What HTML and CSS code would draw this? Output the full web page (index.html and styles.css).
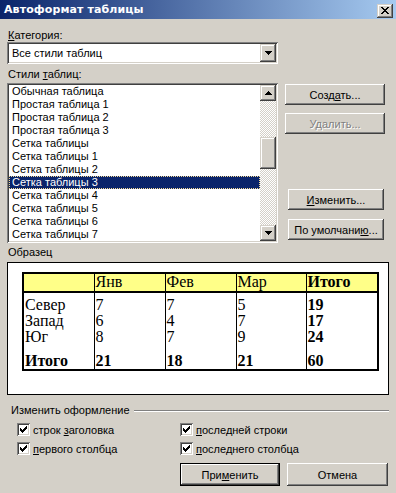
FILE: index.html
```html
<!DOCTYPE html>
<html lang="ru">
<head>
  <meta charset="UTF-8" />
  <title>Автоформат таблицы</title>
  <link rel="stylesheet" href="styles.css">
</head>
<body>
  <div class="dialog">
    <div class="titlebar">
      <span class="title">Автоформат таблицы</span>
      <div class="close-btn raised">
        <svg width="8" height="7" viewBox="0 0 8 7" shape-rendering="crispEdges">
          <path d="M0 0h2v1h-2z M6 0h2v1h-2z M1 1h2v1h-2z M5 1h2v1h-2z M2 2h4v1h-4z M3 3h2v1h-2z M2 4h4v1h-4z M1 5h2v1h-2z M5 5h2v1h-2z M0 6h2v1h-2z M6 6h2v1h-2z" fill="#000"/>
        </svg>
      </div>
    </div>

    <div class="content">
      <div class="lbl lbl-cat"><u>К</u>атегория:</div>
      <div class="combo sunken">
        <div class="combo-text">Все стили таблиц</div>
        <div class="arrow-btn raised">
          <svg width="7" height="4" viewBox="0 0 7 4" shape-rendering="crispEdges"><path d="M0 0h7v1h-1v1h-1v1h-1v1h-1v-1h-1v-1h-1v-1h-1z" fill="#000"/></svg>
        </div>
      </div>

      <div class="lbl lbl-styles">Стили <u>т</u>аблиц:</div>
      <div class="styles-row">
        <div class="listbox sunken">
          <ul class="items">
            <li>Обычная таблица</li>
            <li>Простая таблица 1</li>
            <li>Простая таблица 2</li>
            <li>Простая таблица 3</li>
            <li>Сетка таблицы</li>
            <li>Сетка таблицы 1</li>
            <li>Сетка таблицы 2</li>
            <li class="selected">Сетка таблицы 3</li>
            <li>Сетка таблицы 4</li>
            <li>Сетка таблицы 5</li>
            <li>Сетка таблицы 6</li>
            <li>Сетка таблицы 7</li>
          </ul>
          <div class="scrollbar">
            <div class="arrow-btn raised">
              <svg width="7" height="4" viewBox="0 0 7 4" shape-rendering="crispEdges"><path d="M3 0h1v1h1v1h1v1h1v1h-7v-1h1v-1h1v-1h1z" fill="#000"/></svg>
            </div>
            <div class="track track-top"></div>
            <div class="thumb raised"></div>
            <div class="track track-bottom"></div>
            <div class="arrow-btn raised">
              <svg width="7" height="4" viewBox="0 0 7 4" shape-rendering="crispEdges"><path d="M0 0h7v1h-1v1h-1v1h-1v1h-1v-1h-1v-1h-1v-1h-1z" fill="#000"/></svg>
            </div>
          </div>
        </div>

        <div class="side-btns">
          <div class="btn btn-create"><span>Созд<u>а</u>ть...</span></div>
          <div class="btn btn-delete disabled"><span>Удалить...</span></div>
          <div class="btn btn-edit"><span><u>И</u>зменить...</span></div>
          <div class="btn btn-default"><span>По умолчани<u>ю</u>...</span></div>
        </div>
      </div>

      <div class="lbl lbl-sample">Образец</div>
      <div class="preview">
        <table class="sample">
          <colgroup>
            <col class="c1"><col class="c2"><col class="c3"><col class="c4"><col class="c5">
          </colgroup>
          <tr class="head">
            <td>&nbsp;</td><td>Янв</td><td>Фев</td><td>Мар</td><td class="b">Итого</td>
          </tr>
          <tr class="first">
            <td>Север</td><td>7</td><td>7</td><td>5</td><td class="b">19</td>
          </tr>
          <tr>
            <td>Запад</td><td>6</td><td>4</td><td>7</td><td class="b">17</td>
          </tr>
          <tr>
            <td>Юг</td><td>8</td><td>7</td><td>9</td><td class="b">24</td>
          </tr>
          <tr class="last">
            <td class="b">Итого</td><td class="b">21</td><td class="b">18</td><td class="b">21</td><td class="b">60</td>
          </tr>
        </table>
      </div>

      <div class="group-title">
        <span>Изменить оформление</span>
        <div class="etched"></div>
      </div>

      <div class="checks">
        <div class="check"><span class="box"><svg width="7" height="7" viewBox="0 0 7 7" shape-rendering="crispEdges"><path d="M0 2h1v3h-1z M1 3h1v3h-1z M2 4h1v3h-1z M3 3h1v3h-1z M4 2h1v3h-1z M5 1h1v3h-1z M6 0h1v3h-1z" fill="#000"/></svg></span><span>строк <u>з</u>аголовка</span></div>
        <div class="check"><span class="box"><svg width="7" height="7" viewBox="0 0 7 7" shape-rendering="crispEdges"><path d="M0 2h1v3h-1z M1 3h1v3h-1z M2 4h1v3h-1z M3 3h1v3h-1z M4 2h1v3h-1z M5 1h1v3h-1z M6 0h1v3h-1z" fill="#000"/></svg></span><span><u>п</u>оследней строки</span></div>
        <div class="check"><span class="box"><svg width="7" height="7" viewBox="0 0 7 7" shape-rendering="crispEdges"><path d="M0 2h1v3h-1z M1 3h1v3h-1z M2 4h1v3h-1z M3 3h1v3h-1z M4 2h1v3h-1z M5 1h1v3h-1z M6 0h1v3h-1z" fill="#000"/></svg></span><span><u>п</u>ервого столбца</span></div>
        <div class="check"><span class="box"><svg width="7" height="7" viewBox="0 0 7 7" shape-rendering="crispEdges"><path d="M0 2h1v3h-1z M1 3h1v3h-1z M2 4h1v3h-1z M3 3h1v3h-1z M4 2h1v3h-1z M5 1h1v3h-1z M6 0h1v3h-1z" fill="#000"/></svg></span><span><u>п</u>оследнего столбца</span></div>
      </div>

      <div class="actions">
        <div class="btn btn-apply"><span>При<u>м</u>енить</span></div>
        <div class="btn btn-cancel"><span>Отмена</span></div>
      </div>
    </div>
  </div>
</body>
</html>
```

FILE: styles.css
```css
body {
  margin: 0;
  background: #d4d0c8;
}
.dialog {
  width: 396px;
  height: 493px;
  background: #d4d0c8;
  font-family: "Liberation Sans", Arial, sans-serif;
  font-size: 11px;
  color: #000;
  overflow: hidden;
}
u {
  text-decoration: underline;
  text-underline-offset: 1px;
}

/* 3d edges */
.raised {
  background: #d4d0c8;
  box-shadow: inset -1px -1px #404040, inset 1px 1px #d4d0c8, inset -2px -2px #808080, inset 2px 2px #fff;
}
.sunken {
  background: #fff;
  box-shadow: inset 1px 1px #808080, inset -1px -1px #fff, inset 2px 2px #404040, inset -2px -2px #d4d0c8;
}

.titlebar {
  height: 19px;
  display: flex;
  align-items: center;
  justify-content: space-between;
  padding: 0 3px 0 4px;
  background: linear-gradient(to right, #0a246a, #a6caf0);
}
.title {
  color: #fff;
  font-family: "DejaVu Sans", sans-serif;
  font-weight: bold;
  font-size: 11px;
  letter-spacing: 0.1px;
}
.close-btn {
  width: 16px;
  height: 14px;
  margin-top: 2px;
  display: flex;
  align-items: center;
  justify-content: center;
}

.content {
  padding: 0 8px 0 7px;
}
.lbl {
  line-height: 13px;
  height: 13px;
  padding-left: 1px;
}
.lbl-cat { margin-top: 10px; }
.lbl-styles { margin-top: 4px; margin-bottom: 2px; }
.lbl-sample { margin-top: 3px; margin-bottom: 3px; }

.combo {
  width: 271px;
  height: 22px;
  box-sizing: border-box;
  padding: 2px;
  display: flex;
}
.combo-text {
  flex: 1;
  line-height: 18px;
  padding-left: 3px;
}
.arrow-btn {
  width: 16px;
  height: 16px;
  display: flex;
  align-items: center;
  justify-content: center;
  flex-shrink: 0;
}
.combo .arrow-btn {
  height: 18px;
}

.styles-row {
  display: flex;
  gap: 7px;
}
.listbox {
  width: 271px;
  height: 160px;
  box-sizing: border-box;
  padding: 2px;
  display: flex;
}
.items {
  list-style: none;
  margin: 0;
  padding: 0;
  flex: 1;
}
.items li {
  height: 13px;
  line-height: 13px;
  padding-left: 3px;
  white-space: nowrap;
}
.items li.selected {
  background: #0a246a;
  color: #fff;
  outline: 1px dotted #f5db95;
  outline-offset: -1px;
}
.scrollbar {
  width: 16px;
  display: flex;
  flex-direction: column;
}
.track {
  background: conic-gradient(#fff 25%, #d4d0c8 0 50%, #fff 0 75%, #d4d0c8 0) 0 0 / 2px 2px;
}
.track-top { height: 36px; }
.track-bottom { flex: 1; }
.thumb { height: 32px; }

.side-btns {
  display: flex;
  flex-direction: column;
}
.btn {
  background: #d4d0c8;
  box-shadow: inset -1px -1px #404040, inset 1px 1px #fff, inset -2px -2px #808080, inset 2px 2px #d4d0c8;
  display: flex;
  align-items: center;
  justify-content: center;
  box-sizing: border-box;
  height: 21px;
  width: 100px;
}
.btn-create { margin-top: 1px; }
.btn-delete { margin-top: 8px; }
.btn-edit { margin-top: 55px; margin-left: 3px; width: 96px; }
.btn-default { margin-top: 9px; margin-left: 3px; width: 96px; }
.disabled {
  color: #808080;
  text-shadow: 1px 1px #fff;
}

.preview {
  width: 382px;
  height: 133px;
  box-sizing: border-box;
  border: 1px solid #000;
  background: #fff;
  padding: 9px 0 0 14px;
}
.sample {
  width: 355px;
  table-layout: fixed;
  border-collapse: collapse;
  border: 2px solid #000;
  font-family: "Liberation Serif", "Times New Roman", serif;
  font-size: 16px;
}
.c1, .c2, .c3 { width: 71px; }
.c4 { width: 70px; }
.c5 { width: 72px; }
.sample td {
  border-left: 1px solid #000;
  line-height: 16px;
  padding: 0 1px;
  white-space: nowrap;
}
.sample .head td {
  background: #ffff88;
  border-bottom: 2px solid #000;
  padding-bottom: 1px;
}
.sample .first td { padding-top: 4px; }
.sample .last td { padding-top: 8px; }
.sample .b { font-weight: bold; }

.group-title {
  display: flex;
  align-items: center;
  margin-top: 9px;
  padding-left: 4px;
  height: 13px;
  line-height: 13px;
}
.etched {
  flex: 1;
  height: 0;
  border-top: 1px solid #808080;
  border-bottom: 1px solid #fff;
  margin-left: 4px;
  margin-right: -1px;
}

.checks {
  display: grid;
  grid-template-columns: 163px auto;
  row-gap: 6px;
  margin-top: 6px;
  padding-left: 10px;
}
.check {
  display: flex;
  align-items: center;
  height: 13px;
}
.box {
  width: 13px;
  height: 13px;
  box-sizing: border-box;
  background: #fff;
  box-shadow: inset 1px 1px #808080, inset -1px -1px #fff, inset 2px 2px #404040, inset -2px -2px #d4d0c8;
  display: flex;
  align-items: center;
  justify-content: center;
  margin-right: 3px;
  flex-shrink: 0;
}

.actions {
  display: flex;
  justify-content: flex-end;
  gap: 7px;
  margin-top: 8px;
}
.actions .btn {
  height: 23px;
  width: 100px;
}
.btn-apply {
  outline: 1px solid #000;
  outline-offset: -1px;
  box-shadow: inset -2px -2px #404040, inset 2px 2px #fff, inset -3px -3px #808080;
}
.actions .btn-cancel { width: 101px; }
```
